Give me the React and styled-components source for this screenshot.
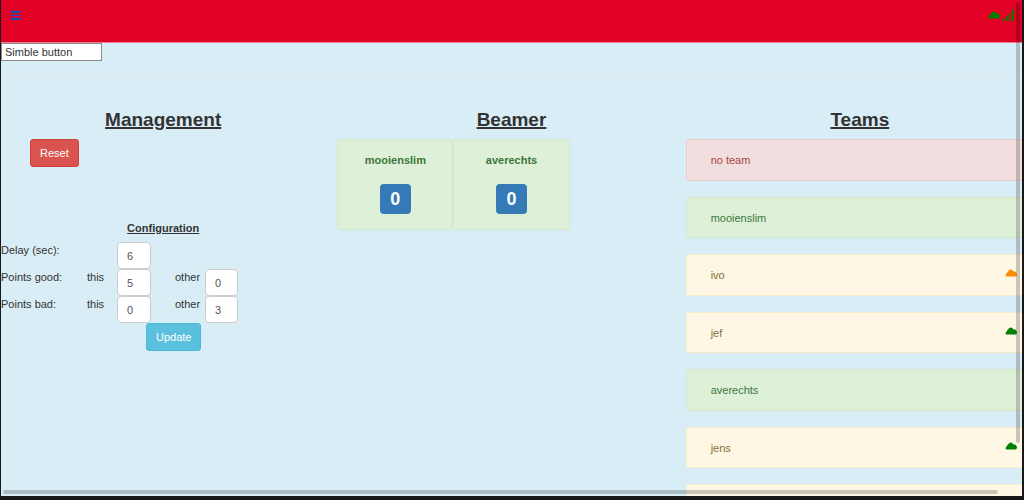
import React from "react";
import styled, { createGlobalStyle, css } from "styled-components";

const GlobalStyle = createGlobalStyle`
  *, *::before, *::after { box-sizing: border-box; }
  body {
    margin: 0;
    background: #1a171b;
    color: #333;
    font-family: "Liberation Sans", Arial, sans-serif;
    font-size: 11px;
    line-height: 16px;
  }
  input, button { font: inherit; }
`;

const Frame = styled.div`
  height: 100vh;
  padding: 0 2px 4px 1px;
`;

const Screen = styled.div`
  position: relative;
  height: 100%;
  overflow: hidden;
  background: #d9edf7;
`;

const Header = styled.header`
  display: flex;
  justify-content: space-between;
  height: 43px;
  padding: 9px 7px 0 9px;
  background: #e20024;
  border-bottom: 1px solid #ee8098;
`;

const MenuButton = styled.button`
  display: flex;
  width: 11px;
  height: 12px;
  padding: 0;
  border: 0;
  background: none;
  color: #1c4db4;
`;

const Status = styled.div`
  display: flex;
  gap: 3px;
  color: #008000;
`;

const SearchField = styled.input`
  display: block;
  width: 101px;
  height: 18px;
  padding: 0 3px;
  border: 1px solid #8b8b8b;
  border-radius: 0;
  background: #fff;
  color: #333;
`;

const Divider = styled.hr`
  margin: 16px 0 28px;
  border: 0;
  border-top: 1px solid #e8eef2;
`;

const Columns = styled.main`
  display: grid;
  grid-template-columns: repeat(3, 1fr);
  margin: 0 -12px;
`;

const Title = styled.h2`
  margin: 0 0 5px;
  font-size: 19px;
  line-height: 28px;
  text-align: center;
  text-decoration: underline 2px;
`;

const Subtitle = styled.h3`
  margin: 53px 0 6px;
  font-size: 11px;
  line-height: 16px;
  text-align: center;
  text-decoration: underline;
`;

const tones = {
  danger: css`background: #d9534f; border-color: #d43f3a;`,
  info: css`background: #5bc0de; border-color: #46b8da;`,
};

const Button = styled.button`
  height: 28px;
  padding: 0 9px;
  border: 1px solid;
  border-radius: 3px;
  color: #fff;
  ${({ $tone }) => tones[$tone]}
`;

const Actions = styled.div`
  display: flex;
  padding-left: 41px;
`;

const Form = styled.form`
  padding: 0 12px;
`;

const Setting = styled.div`
  display: grid;
  grid-template-columns: 86px 30px 34px 24px 30px 33px;
  height: 27px;
`;

const Label = styled.label``;

const NumberField = styled.input`
  width: 100%;
  height: 27px;
  padding: 0 9px;
  border: 1px solid #ccc;
  border-radius: 4px;
  background: #fff;
  color: #555;
  grid-column: ${({ $column }) => $column};
`;

const Submit = styled.div`
  display: flex;
  padding-left: 145px;
`;

const Scores = styled.div`
  display: grid;
  grid-template-columns: repeat(3, 1fr);
`;

const Score = styled.section`
  display: flex;
  flex-direction: column;
  align-items: center;
  gap: 16px;
  height: 91px;
  padding-top: 12px;
  border: 1px solid #d6e9c6;
  border-radius: 3px;
  background: #dff0d8;
  color: #3c763d;
  font-weight: bold;
`;

const Badge = styled.span`
  width: 31px;
  border-radius: 4px;
  background: #337ab7;
  color: #fff;
  font-size: 18px;
  line-height: 30px;
  text-align: center;
`;

const TeamList = styled.ul`
  display: grid;
  grid-auto-rows: 42px 41px;
  gap: 16px;
  margin: 0;
  padding: 0;
  list-style: none;
`;

const states = {
  danger: css`background: #f2dede; border-color: #ebccd1; color: #a94442;`,
  success: css`background: #dff0d8; border-color: #d6e9c6; color: #3c763d;`,
  warning: css`background: #fdf7e3; border-color: #faebcc; color: #8a6d3b;`,
};

const Team = styled.li`
  display: flex;
  justify-content: space-between;
  padding: 12px 16px 12px 24px;
  border: 1px solid;
  border-radius: 3px;
  ${({ $state }) => states[$state]}
`;

const CloudSvg = styled.svg`
  width: 12px;
  height: 12px;
  color: ${({ $color }) => $color};
`;

const Thumb = styled.div`
  position: absolute;
  border-radius: 2px;
  background: rgba(0, 0, 0, 0.2);
  ${({ $axis }) =>
    $axis === "y"
      ? css`top: 2px; right: 2px; width: 4px; height: 89%;`
      : css`left: 2px; bottom: 2px; height: 4px; right: 24px;`}
`;

function Cloud({ color }) {
  return (
    <CloudSvg viewBox="0 0 12 12" $color={color} aria-hidden="true">
      <path
        fill="currentColor"
        d="M1.4 9.6Q.6 9.2 .6 8Q.7 6.6 2 6.2Q2 4.6 3.2 4.4Q3.8 2.6 5.6 2.6Q7.6 2.6 8.4 4.4H10Q11.2 4.6 11.2 5.8Q12 6.6 12 7.6Q12 9 10.8 9.6Z"
      />
    </CloudSvg>
  );
}

function Signal() {
  return (
    <svg width="12" height="12" viewBox="0 0 12 12" aria-hidden="true">
      <path
        fill="currentColor"
        d="M0 9h1.6v3H0zM3 7h1.6v5H3zM6 4.5h1.6V12H6zM9 .5h1.8V12H9z"
      />
    </svg>
  );
}

const settings = [
  { label: "Delay (sec):", own: "6" },
  { label: "Points good:", own: "5", other: "0" },
  { label: "Points bad:", own: "0", other: "3" },
];

const scores = [
  { name: "mooienslim", points: 0 },
  { name: "averechts", points: 0 },
];

const teams = [
  { name: "no team", state: "danger" },
  { name: "mooienslim", state: "success" },
  { name: "ivo", state: "warning", cloud: "#ff8c00" },
  { name: "jef", state: "warning", cloud: "#008000" },
  { name: "averechts", state: "success" },
  { name: "jens", state: "warning", cloud: "#008000" },
  { name: "", state: "warning" },
];

function SettingRow({ label, own, other, id }) {
  const paired = other !== undefined;
  return (
    <Setting>
      <Label htmlFor={`${id}-own`}>{label}</Label>
      {paired && <Label htmlFor={`${id}-own`}>this</Label>}
      <NumberField id={`${id}-own`} $column={3} defaultValue={own} />
      {paired && (
        <>
          <span />
          <Label htmlFor={`${id}-other`}>other</Label>
          <NumberField id={`${id}-other`} $column={6} defaultValue={other} />
        </>
      )}
    </Setting>
  );
}

export default function App() {
  return (
    <>
      <GlobalStyle />
      <Frame>
        <Screen>
          <Header>
            <MenuButton type="button" aria-label="Menu">
              <svg width="11" height="12" viewBox="0 0 11 12" aria-hidden="true">
                <path fill="currentColor" d="M.5 1.8h10V4H.5zM.5 5.7h10v1.4H.5zM.5 8.7h10V11H.5z" />
              </svg>
            </MenuButton>
            <Status>
              <Cloud color="#008000" />
              <Signal />
            </Status>
          </Header>
          <SearchField aria-label="Button name" defaultValue="Simble button" />
          <Divider />
          <Columns>
            <section>
              <Title>Management</Title>
              <Actions>
                <Button type="button" $tone="danger">Reset</Button>
              </Actions>
              <Subtitle>Configuration</Subtitle>
              <Form onSubmit={(event) => event.preventDefault()}>
                {settings.map((setting, index) => (
                  <SettingRow key={setting.label} id={`setting-${index}`} {...setting} />
                ))}
                <Submit>
                  <Button type="submit" $tone="info">Update</Button>
                </Submit>
              </Form>
            </section>
            <section>
              <Title>Beamer</Title>
              <Scores>
                {scores.map(({ name, points }) => (
                  <Score key={name}>
                    {name}
                    <Badge>{points}</Badge>
                  </Score>
                ))}
              </Scores>
            </section>
            <section>
              <Title>Teams</Title>
              <TeamList>
                {teams.map(({ name, state, cloud }, index) => (
                  <Team key={index} $state={state}>
                    {name}
                    {cloud && <Cloud color={cloud} />}
                  </Team>
                ))}
              </TeamList>
            </section>
          </Columns>
          <Thumb $axis="y" />
          <Thumb $axis="x" />
        </Screen>
      </Frame>
    </>
  );
}
